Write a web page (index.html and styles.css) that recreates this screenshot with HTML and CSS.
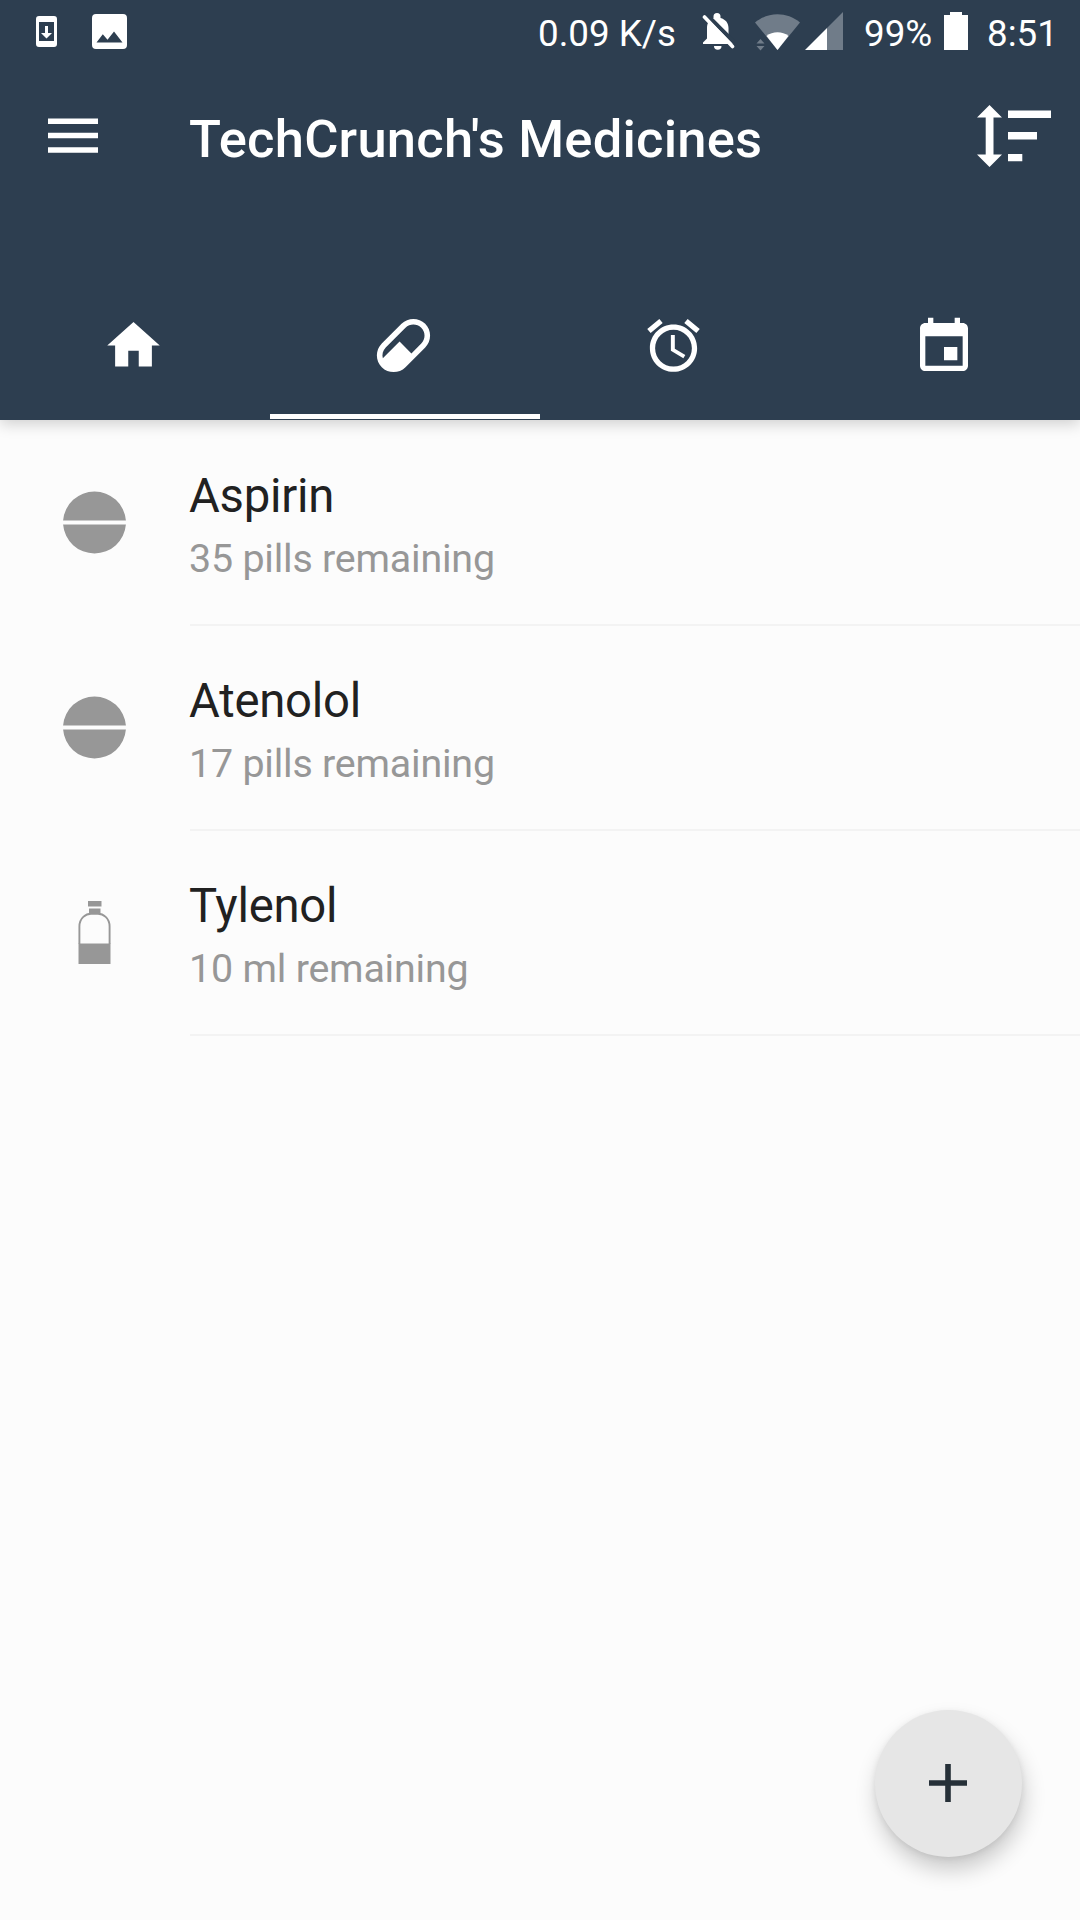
FILE: index.html
```html
<!DOCTYPE html>
<html lang="en">
<head>
<meta charset="utf-8">
<title>TechCrunch's Medicines</title>
<link rel="stylesheet" href="styles.css">
</head>
<body>
<div class="screen">
  <header class="header">
    <div class="status">
      <svg class="status-download" width="21" height="31" viewBox="0 0 21 31"><path fill-rule="evenodd" d="M3 0h15a3 3 0 0 1 3 3v25a3 3 0 0 1-3 3H3a3 3 0 0 1-3-3V3a3 3 0 0 1 3-3zM3 6v19h15V6z"/><path d="M9 10h3v7h4l-5.500 5.500L5 17h4z"/></svg>
      <svg class="status-image" width="35" height="35" viewBox="0 0 35 35"><path fill-rule="evenodd" d="M4 0h27a4 4 0 0 1 4 4v27a4 4 0 0 1-4 4H4a4 4 0 0 1-4-4V4a4 4 0 0 1 4-4zM4.500 28.500h26L22 17.500l-6.500 8.300-4.700-5.600z"/></svg>
      <span class="status-speed">0.09 K/s</span>
      <svg class="status-bell" width="33" height="38" viewBox="0 0 33 38"><path d="M1 31v-1.500l4-4V15c0-5 2.500-8.500 6.500-10V3.500a3.500 3.500 0 0 1 7 0V5c5 1.300 8 5 8 10v11l4 4v1z"/><path d="M12 33h7.500a3.750 3.750 0 0 1-7.500 0z"/><path class="bell-gap" d="M4.500 1.500 34 31"/><path class="bell-slash" d="M2.500 4 30.500 33.500"/></svg>
      <svg class="status-wifi" width="46" height="37" viewBox="0 0 46 37"><path class="dim" d="M0 8.500C13-2.500 32-2.500 45 8.500L22.500 36z"/><path class="dim" d="M1.500 29.500l4-4.500 4 4.500zM1.500 32l4 4.500 4-4.500z"/><path d="M11.500 22c6-5 16-5 22 0L22.500 36z"/></svg>
      <svg class="status-signal" width="38" height="38" viewBox="0 0 38 38"><path class="dim" d="M38 0v38H22V16z"/><path d="M0 38 22 16v22z"/></svg>
      <span class="status-percent">99%</span>
      <svg class="status-battery" width="24" height="38" viewBox="0 0 24 38"><path d="M6 0h12v3h6v35H0V3h6z"/></svg>
      <span class="status-time">8:51</span>
    </div>
    <div class="toolbar">
      <svg class="menu" width="50" height="35" viewBox="0 0 50 35"><path d="M0 .5h50v5.500H0zM0 14.800h50v5.500H0zM0 29.200h50v5.500H0z"/></svg>
      <h1 class="title">TechCrunch's Medicines</h1>
      <svg class="sort" width="74" height="62" viewBox="0 0 74 62"><path d="M12.500 0 25 12.500h-8.500v37H25L12.500 62 0 49.500h8.700v-37H0zM31 5.500h43v7.500H31zM31 27h29v7.500H31zM31 49h14.300v7.300H31z"/></svg>
    </div>
    <nav class="tabs">
      <a class="tab"><svg width="63" height="63" viewBox="0 0 24 24"><path d="M10 20v-6h4v6h5v-8h3L12 3 2 12h3v8z"/></svg></a>
      <a class="tab tab-active"><svg width="67" height="67" viewBox="0 0 24 24"><path d="M4.220 11.290 11.290 4.220C13.640 1.880 17.430 1.880 19.780 4.220 22.120 6.560 22.120 10.360 19.780 12.710L12.710 19.780C10.360 22.120 6.560 22.120 4.220 19.780 1.880 17.430 1.880 13.640 4.220 11.290M5.640 12.710C4.590 13.750 4.240 15.240 4.600 16.570L10.590 10.590 14.830 14.830 18.360 11.290C19.930 9.730 19.930 7.200 18.360 5.640 16.800 4.070 14.270 4.070 12.710 5.640z"/></svg></a>
      <a class="tab"><svg width="63" height="63" viewBox="0 0 24 24"><path d="M22 5.720l-4.600-3.860-1.290 1.530 4.600 3.860L22 5.720zM7.880 3.390L6.600 1.860 2 5.710l1.290 1.530 4.590-3.850zM12.500 8H11v6l4.750 2.850.75-1.230-4-2.370V8zM12 4c-4.970 0-9 4.030-9 9s4.020 9 9 9c4.970 0 9-4.030 9-9s-4.030-9-9-9zm0 16c-3.870 0-7-3.130-7-7s3.130-7 7-7 7 3.130 7 7-3.130 7-7 7z"/></svg></a>
      <a class="tab tab-calendar"><svg width="64" height="64" viewBox="0 0 24 24"><path d="M17 12h-5v5h5v-5zM16 1v2H8V1H6v2H5c-1.110 0-1.990.9-1.990 2L3 19c0 1.100.89 2 2 2h14c1.100 0 2-.9 2-2V5c0-1.100-.9-2-2-2h-1V1h-2zm3 18H5V8h14v11z"/></svg></a>
    </nav>
  </header>
  <main class="list">
    <div class="row">
      <div class="row-icon"><svg width="63" height="63" viewBox="0 0 63 63"><path d="M.1 29.500a31.500 31.500 0 0 1 62.800 0zM.1 33.500a31.500 31.500 0 0 0 62.800 0z"/></svg></div>
      <div class="row-text"><div class="name">Aspirin</div><div class="remaining">35 pills remaining</div></div>
    </div>
    <div class="row">
      <div class="row-icon"><svg width="63" height="63" viewBox="0 0 63 63"><path d="M.1 29.500a31.500 31.500 0 0 1 62.800 0zM.1 33.500a31.500 31.500 0 0 0 62.800 0z"/></svg></div>
      <div class="row-text"><div class="name">Atenolol</div><div class="remaining">17 pills remaining</div></div>
    </div>
    <div class="row">
      <div class="row-icon"><svg width="63" height="63" viewBox="0 0 63 63"><path d="M25 0h13.500v5.500H25zM26 7.500h11.500V13H26zM15.500 42.500h32V63h-32z"/><path class="bottle-line" d="M16.400 43V25.500C16.400 17 23 12.700 28 12.700h7c5 0 11.600 4.300 11.600 12.800V43"/></svg></div>
      <div class="row-text"><div class="name">Tylenol</div><div class="remaining">10 ml remaining</div></div>
    </div>
  </main>
  <button class="fab" aria-label="Add medicine"><svg width="38" height="38" viewBox="0 0 38 38"><path d="M16.200 0h5.600v16.200H38v5.600H21.800V38h-5.600V21.800H0v-5.600h16.200z"/></svg></button>
</div>
</body>
</html>
```
FILE: styles.css
```css
* { box-sizing: border-box; }
body { margin: 0; font-family: Roboto, sans-serif; }
svg { display: block; flex: none; fill: currentColor; }

.screen {
  position: relative;
  width: 1080px;
  height: 1920px;
  background: #fcfcfc;
  overflow: hidden;
}

.header {
  display: flex;
  flex-direction: column;
  height: 420px;
  background: #2d3e50;
  color: #fff;
  box-shadow: 0 4px 14px rgba(0, 0, 0, .18);
}

.status {
  display: flex;
  align-items: flex-start;
  height: 63px;
  padding-left: 36px;
  font-size: 36.75px;
  line-height: 43px;
  white-space: nowrap;
}
.status span { flex: none; margin-top: 12px; }
.status-download { margin-top: 16px; }
.status-image { margin: 14px 0 0 35px; }
.status-speed { width: 164px; margin-left: 411px; }
.status-bell { margin-top: 13px; }
.status-wifi { margin: 14px 0 0 20px; }
.status-signal { margin: 12px 0 0 4px; }
.status-percent { width: 80px; margin-left: 21px; }
.status-battery { margin: 12px 0 0 0; }
.status-time { margin-left: 19px; }
.dim { fill: #707c89; }
.bell-gap { stroke: #2d3e50; stroke-width: 4; }
.bell-slash { stroke: #fff; stroke-width: 3.6; stroke-linecap: round; }

.toolbar {
  display: flex;
  align-items: center;
  height: 147px;
  padding: 0 29px 2px 48px;
}
.title {
  flex: 1;
  margin: 6px 0 0 91px;
  font-size: 52.5px;
  font-weight: 500;
  line-height: 62px;
  letter-spacing: .22px;
  white-space: nowrap;
}
.sort { margin-top: 1px; }

.tabs {
  display: grid;
  grid-template-columns: repeat(4, 1fr);
  flex: 1;
  padding-top: 62px;
}
.tab {
  display: flex;
  justify-content: center;
  align-items: center;
  height: 147px;
  padding: 5px 3px 0 0;
  border-bottom: 5px solid transparent;
}
.tab-active { border-bottom-color: #fff; }
.tab-calendar { padding: 8px 2px 0 0; }

.list { padding-top: 1px; }
.row { display: flex; height: 205px; }
.row-icon {
  display: flex;
  justify-content: center;
  align-items: center;
  width: 190px;
  padding: 0 2px 3px 0;
  color: #979797;
}
.row-text {
  flex: 1;
  padding-top: 47px;
  border-bottom: 2px solid #f3f3f3;
}
.name {
  margin-left: -1px;
  font-size: 47.25px;
  line-height: 56px;
  letter-spacing: -.25px;
  color: #212121;
}
.remaining {
  margin: 12px 0 0 -1px;
  font-size: 39.375px;
  line-height: 46px;
  letter-spacing: -.2px;
  color: #979797;
}
.bottle-line { fill: none; stroke: currentColor; stroke-width: 1.9; }

.fab {
  position: absolute;
  right: 58px;
  bottom: 63px;
  display: flex;
  justify-content: center;
  align-items: center;
  width: 147px;
  height: 147px;
  padding: 0 2px 1px 0;
  border: 0;
  border-radius: 50%;
  background: #e6e6e6;
  color: #263038;
  box-shadow: 2px 13px 22px rgba(0, 0, 0, .2), 0 2px 6px rgba(0, 0, 0, .08);
}
```
